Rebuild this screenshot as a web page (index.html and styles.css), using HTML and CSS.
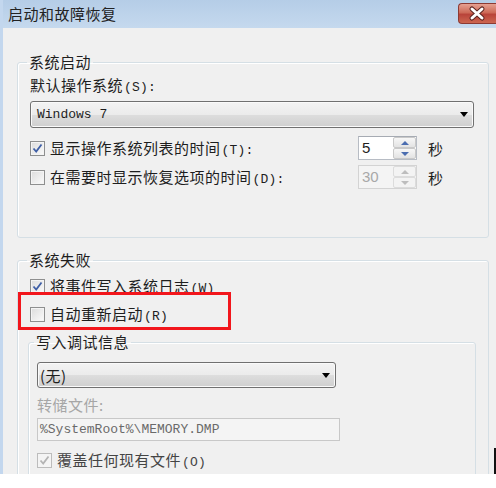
FILE: index.html
```html
<!DOCTYPE html>
<html lang="zh-CN">
<head>
    <meta charset="UTF-8">
    <meta name="viewport" content="width=device-width, initial-scale=1.0">
    <link rel="stylesheet" href="styles.css">
    <title>启动和故障恢复</title>
</head>
<body>
    <div class="window">
        <div class="titlebar">
            <span class="title">启动和故障恢复</span>
            <span class="close">
                <svg width="38" height="21" viewBox="0 0 38 21">
                    <path d="M14 6 L24 15 M24 6 L14 15" stroke="#5b2420" stroke-width="5" stroke-linecap="round"/>
                    <path d="M14 6 L24 15 M24 6 L14 15" stroke="#fff" stroke-width="3" stroke-linecap="round"/>
                </svg>
            </span>
        </div>

        <div class="content">
            <!-- System startup -->
            <fieldset class="group startup">
                <legend>系统启动</legend>
                <div class="text-row">默认操作系统<span class="key">(S):</span></div>
                <div class="combo combo-os">
                    <span class="mono">Windows 7</span>
                    <span class="arrow"></span>
                </div>
                <div class="spin-row first">
                    <label class="check">
                        <span class="box"><svg width="13" height="13" viewBox="0 0 13 13"><path d="M2.5 6.5 L5.2 9.5 L10.5 2.5" fill="none" stroke="#3f5fa6" stroke-width="1.8"/></svg></span>
                        <span>显示操作系统列表的时间<span class="key">(T):</span></span>
                    </label>
                    <div class="spin">
                        <span class="spin-value">5</span>
                        <span class="spin-btns">
                            <span class="spin-btn"><span class="tri-up"></span></span>
                            <span class="spin-btn"><span class="tri-down"></span></span>
                        </span>
                    </div>
                    <span class="unit">秒</span>
                </div>
                <div class="spin-row second">
                    <label class="check">
                        <span class="box"></span>
                        <span>在需要时显示恢复选项的时间<span class="key">(D):</span></span>
                    </label>
                    <div class="spin disabled">
                        <span class="spin-value">30</span>
                        <span class="spin-btns">
                            <span class="spin-btn"><span class="tri-up"></span></span>
                            <span class="spin-btn"><span class="tri-down"></span></span>
                        </span>
                    </div>
                    <span class="unit">秒</span>
                </div>
            </fieldset>

            <!-- System failure -->
            <fieldset class="group failure">
                <legend>系统失败</legend>
                <label class="check row">
                    <span class="box"><svg width="13" height="13" viewBox="0 0 13 13"><path d="M2.5 6.5 L5.2 9.5 L10.5 2.5" fill="none" stroke="#3f5fa6" stroke-width="1.8"/></svg></span>
                    <span>将事件写入系统日志<span class="key">(W)</span></span>
                </label>
                <label class="check row restart">
                    <span class="box"></span>
                    <span>自动重新启动<span class="key">(R)</span></span>
                </label>

                <fieldset class="group debug">
                    <legend>写入调试信息</legend>
                    <div class="combo combo-debug">
                        <span>(无)</span>
                        <span class="arrow"></span>
                    </div>
                    <div class="text-row muted">转储文件:</div>
                    <div class="textbox mono">%SystemRoot%\MEMORY.DMP</div>
                    <label class="check row overwrite disabled">
                        <span class="box"><svg width="13" height="13" viewBox="0 0 13 13"><path d="M2.5 6.5 L5.2 9.5 L10.5 2.5" fill="none" stroke="#b4b4b4" stroke-width="1.8"/></svg></span>
                        <span>覆盖任何现有文件<span class="key">(O)</span></span>
                    </label>
                </fieldset>
            </fieldset>
        </div>

        <div class="highlight"></div>
        <span class="mark-left"></span>
        <span class="mark-right"></span>
    </div>
</body>
</html>
```

FILE: styles.css
```css
body {
    margin: 0;
    background: #fff;
    font-family: "Noto Sans CJK SC", sans-serif;
    font-size: 15px;
    letter-spacing: 0.5px;
    color: #1e1e1e;
}

.window {
    position: relative;
    width: 496px;
    height: 474px;
    box-sizing: border-box;
    overflow: hidden;
    background: #f0f0f0;
    border-left: 3px solid #c3d7ee;
}

.titlebar {
    height: 28px;
    display: flex;
    align-items: flex-start;
    justify-content: space-between;
    background: linear-gradient(#b5cde7, #c5d9ee);
}

.title {
    margin: 4px 0 0 5px;
    line-height: 20px;
    color: #222;
}

.close {
    display: block;
    width: 38px;
    height: 21px;
    margin-top: 3px;
    box-sizing: border-box;
    border: 1px solid #8d3a33;
    border-right: none;
    border-radius: 4px 0 0 4px;
    background: linear-gradient(#e6a192, #cd6a58 45%, #b9443a 55%, #cc6650);
}

.close svg {
    display: block;
    margin: -1px 0 0 -1px;
}

.content {
    padding: 24px 7px 0 14px;
}

.group {
    margin: 0;
    border: 1px solid #d5dfe5;
    border-radius: 3px;
    box-shadow: inset 1px 1px 0 #fff;
    min-width: 0;
}

.group legend {
    padding: 0 2px;
    margin-left: -3px;
    line-height: 20px;
}

.startup {
    padding: 3px 14px 48px 12px;
}

.failure {
    margin-top: 12px;
    padding: 6px 12px 40px 12px;
}

.debug {
    margin: 8px 0 0 -2px;
    padding: 10px 8px 30px 8px;
}

.text-row {
    height: 20px;
    line-height: 20px;
}

.muted {
    color: #a6a6a6;
    margin-top: 7px;
}

.mono {
    font-family: "Liberation Mono", monospace;
    font-size: 13px;
    letter-spacing: 0;
}

.key {
    font-family: "Liberation Mono", monospace;
    font-size: 13px;
    line-height: 0;
    letter-spacing: 0.2px;
    margin-left: 1px;
}

.combo {
    display: flex;
    align-items: center;
    justify-content: space-between;
    box-sizing: border-box;
    border: 1px solid #707070;
    border-radius: 3px;
    background: linear-gradient(#f3f3f3, #ebebeb 50%, #dddddd 51%, #cfcfcf);
    box-shadow: inset 0 0 0 1px #fafafa;
}

.combo-os {
    height: 27px;
    margin-top: 6px;
    padding: 0 5px 0 6px;
}

.combo-debug {
    width: 299px;
    height: 26px;
    padding: 0 5px 0 2px;
}

.arrow {
    width: 0;
    height: 0;
    border-left: 4px solid transparent;
    border-right: 4px solid transparent;
    border-top: 5px solid #000;
}

.check {
    display: flex;
    align-items: center;
    gap: 5px;
    height: 20px;
    line-height: 20px;
}

.box {
    flex: none;
    width: 15px;
    height: 15px;
    box-sizing: border-box;
    border: 1px solid #8e8f8f;
    background: linear-gradient(135deg, #dcdcdc, #fbfbfb);
    box-shadow: inset 0 0 0 1px #f4f4f4;
    display: flex;
    align-items: center;
    justify-content: center;
}

.disabled .box {
    border-color: #bcbcbc;
    background: #f4f4f4;
}

.restart {
    margin-top: 8px;
}

.overwrite {
    margin-top: 9px;
    color: #444;
}

.spin-row {
    display: flex;
    align-items: center;
    height: 24px;
}

.spin-row .check {
    flex: 0 0 328px;
}

.spin-row.first {
    margin-top: 8px;
}

.spin-row.second {
    margin-top: 5px;
}

.spin {
    display: flex;
    width: 59px;
    height: 24px;
    box-sizing: border-box;
    border: 1px solid #b7bcc4;
    border-top-color: #a6abb3;
    background: #fff;
}

.spin-value {
    flex: 1;
    padding-left: 3px;
    font-family: "Liberation Sans", sans-serif;
    font-size: 15px;
    line-height: 22px;
    letter-spacing: 0;
}

.spin-btns {
    display: flex;
    flex-direction: column;
    width: 23px;
}

.spin-btn {
    flex: 1;
    display: flex;
    align-items: center;
    justify-content: center;
    border: 1px solid #c9c9c9;
    border-radius: 2px;
    background: linear-gradient(#f7f7f7, #e3e3e3);
}

.tri-up,
.tri-down {
    width: 0;
    height: 0;
    border-left: 4px solid transparent;
    border-right: 4px solid transparent;
}

.tri-up {
    border-bottom: 4px solid #4b6db0;
}

.tri-down {
    border-top: 4px solid #4b6db0;
}

.spin.disabled {
    border-color: #d3d3d3;
    background: #f4f4f4;
}

.spin.disabled .spin-value {
    color: #a8a8a8;
}

.spin.disabled .spin-btn {
    border-color: #dcdcdc;
    background: #f3f3f3;
}

.spin.disabled .tri-up {
    border-bottom-color: #bdbdbd;
}

.spin.disabled .tri-down {
    border-top-color: #bdbdbd;
}

.unit {
    margin-left: 11px;
}

.textbox {
    width: 303px;
    height: 23px;
    margin-top: 3px;
    box-sizing: border-box;
    padding-left: 2px;
    border: 1px solid #c8c8c8;
    background: #f4f4f4;
    color: #6a6a6a;
    line-height: 21px;
}

/* red annotation frame drawn over the dialog */
.highlight {
    position: absolute;
    left: 15px;
    top: 292px;
    width: 213px;
    height: 38px;
    box-sizing: border-box;
    border: 3px solid #f2161c;
}

.mark-left {
    position: absolute;
    left: -3px;
    top: 275px;
    width: 3px;
    height: 3px;
    background: #5a3a20;
}

.mark-right {
    position: absolute;
    left: 491px;
    top: 448px;
    width: 2px;
    height: 26px;
    background: #111;
}
```
